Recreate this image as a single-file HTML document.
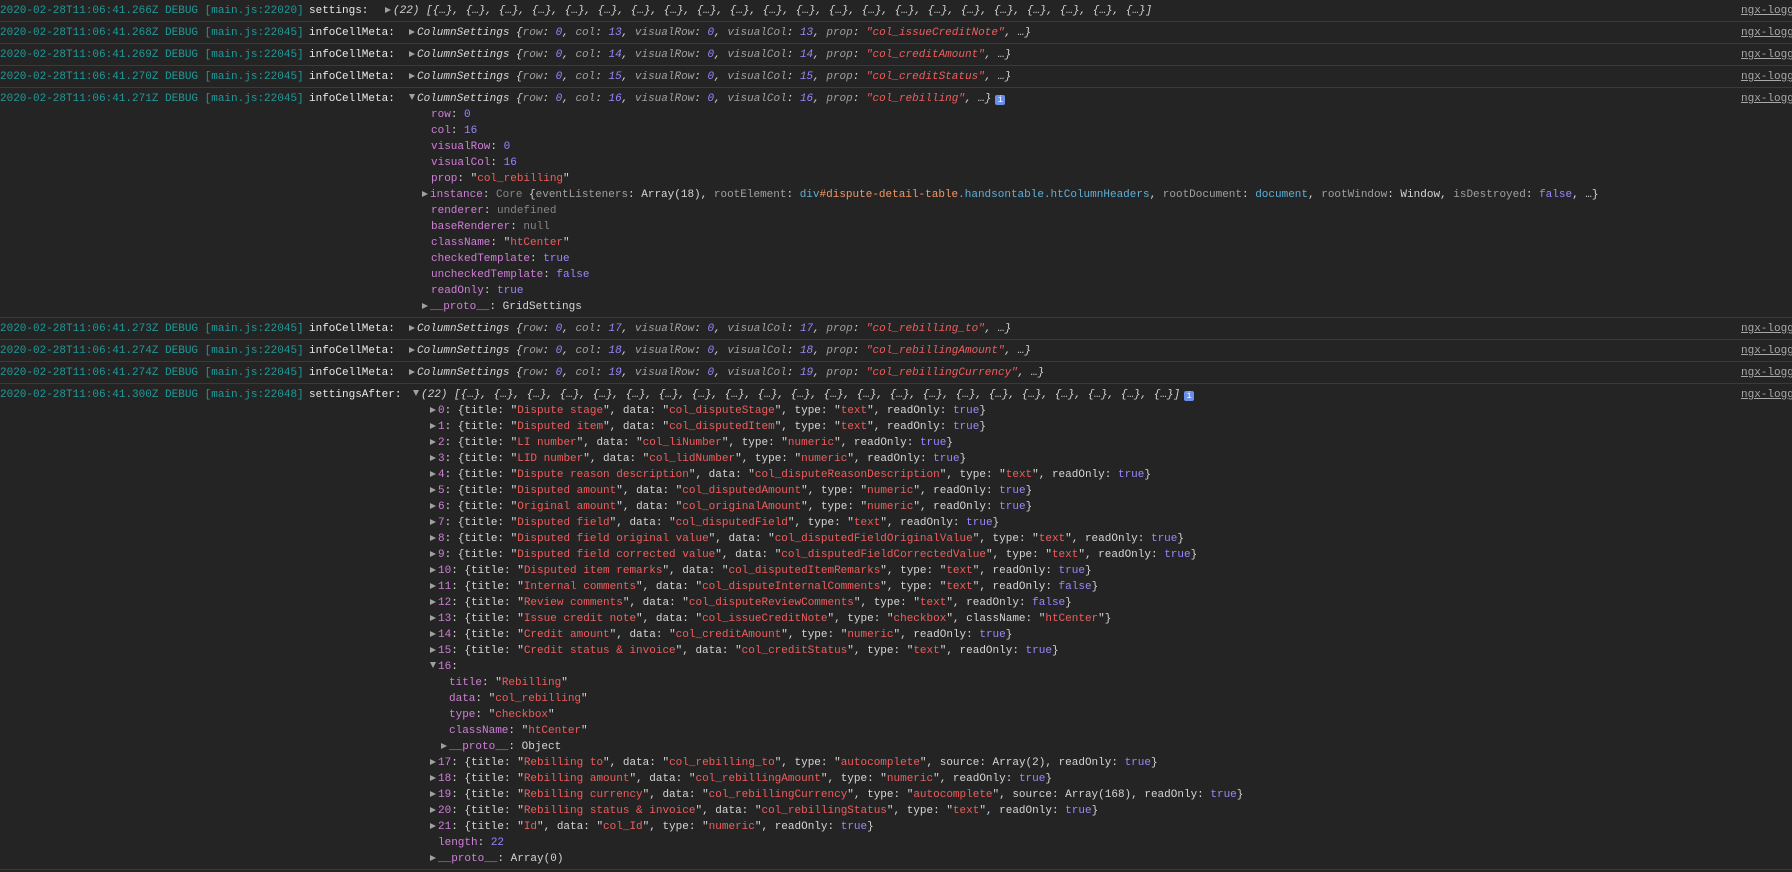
<!DOCTYPE html>
<html><head><meta charset="utf-8"><style>
html,body{margin:0;padding:0;background:#242424;width:1792px;height:872px;overflow:hidden}
body{font-family:"Liberation Mono",monospace;font-size:11px;color:#d5d5d5;line-height:16px;position:relative}
.row{position:relative;border-bottom:1px solid #3a3a3a;padding:3px 0 2px 0;height:16px}
.row.tall{height:auto}
.row>span{white-space:pre}
.ts{position:absolute;left:0;top:3px;color:#1f9a9a}
.lb{position:absolute;left:309px;top:3px;color:#e8e8e8}
.src{position:absolute;left:1741px;top:3px;color:#a8a8a8;text-decoration:underline}
.l{height:16px;position:relative;white-space:pre}
.i{font-style:italic}
.k{color:#a0a0a0}
.n{color:#9a86ff}
.s{color:#ef5d5d}
.p{color:#d07fd8}
.g{color:#868686}
.bl{color:#5db0d7}
.or{color:#f29766}
.tri{display:inline-block;width:0;height:0;border-top:3.5px solid transparent;border-bottom:3.5px solid transparent;border-left:6px solid #a0a0a0;margin-right:2px;vertical-align:0}
.trd{display:inline-block;width:0;height:0;border-left:3.5px solid transparent;border-right:3.5px solid transparent;border-top:6px solid #a0a0a0;margin-right:2px;vertical-align:1px}
.info{display:inline-block;width:10px;height:10px;background:#6b8fe8;color:#fff;border-radius:2px;font-size:9px;line-height:10px;text-align:center;font-style:normal;vertical-align:-1px;margin-left:4px}
</style></head><body>
<div class="row"><span class="ts">2020-02-28T11:06:41.266Z DEBUG [main.js:22020]</span><span class="lb">settings:</span><span style="position:absolute;left:385px;top:3px"><span class="tri"></span><span class="i">(22) [{…}, {…}, {…}, {…}, {…}, {…}, {…}, {…}, {…}, {…}, {…}, {…}, {…}, {…}, {…}, {…}, {…}, {…}, {…}, {…}, {…}, {…}]</span></span><span class="src">ngx-logg</span></div>
<div class="row"><span class="ts">2020-02-28T11:06:41.268Z DEBUG [main.js:22045]</span><span class="lb">infoCellMeta:</span><span style="position:absolute;left:409px;top:3px"><span class="tri"></span><span class="i">ColumnSettings {<span class="k">row</span>: <span class="n">0</span>, <span class="k">col</span>: <span class="n">13</span>, <span class="k">visualRow</span>: <span class="n">0</span>, <span class="k">visualCol</span>: <span class="n">13</span>, <span class="k">prop</span>: <span class="s">"col_issueCreditNote"</span>, …}</span></span><span class="src">ngx-logg</span></div>
<div class="row"><span class="ts">2020-02-28T11:06:41.269Z DEBUG [main.js:22045]</span><span class="lb">infoCellMeta:</span><span style="position:absolute;left:409px;top:3px"><span class="tri"></span><span class="i">ColumnSettings {<span class="k">row</span>: <span class="n">0</span>, <span class="k">col</span>: <span class="n">14</span>, <span class="k">visualRow</span>: <span class="n">0</span>, <span class="k">visualCol</span>: <span class="n">14</span>, <span class="k">prop</span>: <span class="s">"col_creditAmount"</span>, …}</span></span><span class="src">ngx-logg</span></div>
<div class="row"><span class="ts">2020-02-28T11:06:41.270Z DEBUG [main.js:22045]</span><span class="lb">infoCellMeta:</span><span style="position:absolute;left:409px;top:3px"><span class="tri"></span><span class="i">ColumnSettings {<span class="k">row</span>: <span class="n">0</span>, <span class="k">col</span>: <span class="n">15</span>, <span class="k">visualRow</span>: <span class="n">0</span>, <span class="k">visualCol</span>: <span class="n">15</span>, <span class="k">prop</span>: <span class="s">"col_creditStatus"</span>, …}</span></span><span class="src">ngx-logg</span></div>
<div class="row tall"><span class="ts">2020-02-28T11:06:41.271Z DEBUG [main.js:22045]</span><span class="lb">infoCellMeta:</span><span class="src">ngx-logg</span>
<div class="l" style="padding-left:409px"><span class="trd"></span><span class="i">ColumnSettings {<span class="k">row</span>: <span class="n">0</span>, <span class="k">col</span>: <span class="n">16</span>, <span class="k">visualRow</span>: <span class="n">0</span>, <span class="k">visualCol</span>: <span class="n">16</span>, <span class="k">prop</span>: <span class="s">"col_rebilling"</span>, …}<span class="info">i</span></span></div>
<div class="l" style="padding-left:431px"><span class="p">row</span>: <span class="n">0</span></div>
<div class="l" style="padding-left:431px"><span class="p">col</span>: <span class="n">16</span></div>
<div class="l" style="padding-left:431px"><span class="p">visualRow</span>: <span class="n">0</span></div>
<div class="l" style="padding-left:431px"><span class="p">visualCol</span>: <span class="n">16</span></div>
<div class="l" style="padding-left:431px"><span class="p">prop</span>: "<span class="s">col_rebilling</span>"</div>
<div class="l" style="padding-left:422px"><span class="tri"></span><span class="p">instance</span>: <span class="g">Core</span> {<span class="k">eventListeners</span>: Array(18), <span class="k">rootElement</span>: <span class="bl">div</span><span class="or">#dispute-detail-table</span><span class="bl">.handsontable.htColumnHeaders</span>, <span class="k">rootDocument</span>: <span class="bl">document</span>, <span class="k">rootWindow</span>: Window, <span class="k">isDestroyed</span>: <span class="n">false</span>, …}</div>
<div class="l" style="padding-left:431px"><span class="p">renderer</span>: <span class="g">undefined</span></div>
<div class="l" style="padding-left:431px"><span class="p">baseRenderer</span>: <span class="g">null</span></div>
<div class="l" style="padding-left:431px"><span class="p">className</span>: "<span class="s">htCenter</span>"</div>
<div class="l" style="padding-left:431px"><span class="p">checkedTemplate</span>: <span class="n">true</span></div>
<div class="l" style="padding-left:431px"><span class="p">uncheckedTemplate</span>: <span class="n">false</span></div>
<div class="l" style="padding-left:431px"><span class="p">readOnly</span>: <span class="n">true</span></div>
<div class="l" style="padding-left:422px"><span class="tri"></span><span class="p">__proto__</span>: GridSettings</div>
</div>
<div class="row"><span class="ts">2020-02-28T11:06:41.273Z DEBUG [main.js:22045]</span><span class="lb">infoCellMeta:</span><span style="position:absolute;left:409px;top:3px"><span class="tri"></span><span class="i">ColumnSettings {<span class="k">row</span>: <span class="n">0</span>, <span class="k">col</span>: <span class="n">17</span>, <span class="k">visualRow</span>: <span class="n">0</span>, <span class="k">visualCol</span>: <span class="n">17</span>, <span class="k">prop</span>: <span class="s">"col_rebilling_to"</span>, …}</span></span><span class="src">ngx-logg</span></div>
<div class="row"><span class="ts">2020-02-28T11:06:41.274Z DEBUG [main.js:22045]</span><span class="lb">infoCellMeta:</span><span style="position:absolute;left:409px;top:3px"><span class="tri"></span><span class="i">ColumnSettings {<span class="k">row</span>: <span class="n">0</span>, <span class="k">col</span>: <span class="n">18</span>, <span class="k">visualRow</span>: <span class="n">0</span>, <span class="k">visualCol</span>: <span class="n">18</span>, <span class="k">prop</span>: <span class="s">"col_rebillingAmount"</span>, …}</span></span><span class="src">ngx-logg</span></div>
<div class="row"><span class="ts">2020-02-28T11:06:41.274Z DEBUG [main.js:22045]</span><span class="lb">infoCellMeta:</span><span style="position:absolute;left:409px;top:3px"><span class="tri"></span><span class="i">ColumnSettings {<span class="k">row</span>: <span class="n">0</span>, <span class="k">col</span>: <span class="n">19</span>, <span class="k">visualRow</span>: <span class="n">0</span>, <span class="k">visualCol</span>: <span class="n">19</span>, <span class="k">prop</span>: <span class="s">"col_rebillingCurrency"</span>, …}</span></span><span class="src">ngx-logg</span></div>
<div class="row tall"><span class="ts">2020-02-28T11:06:41.300Z DEBUG [main.js:22048]</span><span class="lb">settingsAfter:</span><span class="src">ngx-logg</span>
<div class="l" style="padding-left:413px"><span class="trd"></span><span class="i">(22) [{…}, {…}, {…}, {…}, {…}, {…}, {…}, {…}, {…}, {…}, {…}, {…}, {…}, {…}, {…}, {…}, {…}, {…}, {…}, {…}, {…}, {…}]<span class="info">i</span></span></div>
<div class="l" style="padding-left:430px"><span class="tri"></span><span class="p">0</span>: {title: "<span class="s">Dispute stage</span>", data: "<span class="s">col_disputeStage</span>", type: "<span class="s">text</span>", readOnly: <span class="n">true</span>}</div>
<div class="l" style="padding-left:430px"><span class="tri"></span><span class="p">1</span>: {title: "<span class="s">Disputed item</span>", data: "<span class="s">col_disputedItem</span>", type: "<span class="s">text</span>", readOnly: <span class="n">true</span>}</div>
<div class="l" style="padding-left:430px"><span class="tri"></span><span class="p">2</span>: {title: "<span class="s">LI number</span>", data: "<span class="s">col_liNumber</span>", type: "<span class="s">numeric</span>", readOnly: <span class="n">true</span>}</div>
<div class="l" style="padding-left:430px"><span class="tri"></span><span class="p">3</span>: {title: "<span class="s">LID number</span>", data: "<span class="s">col_lidNumber</span>", type: "<span class="s">numeric</span>", readOnly: <span class="n">true</span>}</div>
<div class="l" style="padding-left:430px"><span class="tri"></span><span class="p">4</span>: {title: "<span class="s">Dispute reason description</span>", data: "<span class="s">col_disputeReasonDescription</span>", type: "<span class="s">text</span>", readOnly: <span class="n">true</span>}</div>
<div class="l" style="padding-left:430px"><span class="tri"></span><span class="p">5</span>: {title: "<span class="s">Disputed amount</span>", data: "<span class="s">col_disputedAmount</span>", type: "<span class="s">numeric</span>", readOnly: <span class="n">true</span>}</div>
<div class="l" style="padding-left:430px"><span class="tri"></span><span class="p">6</span>: {title: "<span class="s">Original amount</span>", data: "<span class="s">col_originalAmount</span>", type: "<span class="s">numeric</span>", readOnly: <span class="n">true</span>}</div>
<div class="l" style="padding-left:430px"><span class="tri"></span><span class="p">7</span>: {title: "<span class="s">Disputed field</span>", data: "<span class="s">col_disputedField</span>", type: "<span class="s">text</span>", readOnly: <span class="n">true</span>}</div>
<div class="l" style="padding-left:430px"><span class="tri"></span><span class="p">8</span>: {title: "<span class="s">Disputed field original value</span>", data: "<span class="s">col_disputedFieldOriginalValue</span>", type: "<span class="s">text</span>", readOnly: <span class="n">true</span>}</div>
<div class="l" style="padding-left:430px"><span class="tri"></span><span class="p">9</span>: {title: "<span class="s">Disputed field corrected value</span>", data: "<span class="s">col_disputedFieldCorrectedValue</span>", type: "<span class="s">text</span>", readOnly: <span class="n">true</span>}</div>
<div class="l" style="padding-left:430px"><span class="tri"></span><span class="p">10</span>: {title: "<span class="s">Disputed item remarks</span>", data: "<span class="s">col_disputedItemRemarks</span>", type: "<span class="s">text</span>", readOnly: <span class="n">true</span>}</div>
<div class="l" style="padding-left:430px"><span class="tri"></span><span class="p">11</span>: {title: "<span class="s">Internal comments</span>", data: "<span class="s">col_disputeInternalComments</span>", type: "<span class="s">text</span>", readOnly: <span class="n">false</span>}</div>
<div class="l" style="padding-left:430px"><span class="tri"></span><span class="p">12</span>: {title: "<span class="s">Review comments</span>", data: "<span class="s">col_disputeReviewComments</span>", type: "<span class="s">text</span>", readOnly: <span class="n">false</span>}</div>
<div class="l" style="padding-left:430px"><span class="tri"></span><span class="p">13</span>: {title: "<span class="s">Issue credit note</span>", data: "<span class="s">col_issueCreditNote</span>", type: "<span class="s">checkbox</span>", className: "<span class="s">htCenter</span>"}</div>
<div class="l" style="padding-left:430px"><span class="tri"></span><span class="p">14</span>: {title: "<span class="s">Credit amount</span>", data: "<span class="s">col_creditAmount</span>", type: "<span class="s">numeric</span>", readOnly: <span class="n">true</span>}</div>
<div class="l" style="padding-left:430px"><span class="tri"></span><span class="p">15</span>: {title: "<span class="s">Credit status &amp; invoice</span>", data: "<span class="s">col_creditStatus</span>", type: "<span class="s">text</span>", readOnly: <span class="n">true</span>}</div>
<div class="l" style="padding-left:430px"><span class="trd"></span><span class="p">16</span>:</div>
<div class="l" style="padding-left:449px"><span class="p">title</span>: "<span class="s">Rebilling</span>"</div>
<div class="l" style="padding-left:449px"><span class="p">data</span>: "<span class="s">col_rebilling</span>"</div>
<div class="l" style="padding-left:449px"><span class="p">type</span>: "<span class="s">checkbox</span>"</div>
<div class="l" style="padding-left:449px"><span class="p">className</span>: "<span class="s">htCenter</span>"</div>
<div class="l" style="padding-left:441px"><span class="tri"></span><span class="p">__proto__</span>: Object</div>
<div class="l" style="padding-left:430px"><span class="tri"></span><span class="p">17</span>: {title: "<span class="s">Rebilling to</span>", data: "<span class="s">col_rebilling_to</span>", type: "<span class="s">autocomplete</span>", source: Array(2), readOnly: <span class="n">true</span>}</div>
<div class="l" style="padding-left:430px"><span class="tri"></span><span class="p">18</span>: {title: "<span class="s">Rebilling amount</span>", data: "<span class="s">col_rebillingAmount</span>", type: "<span class="s">numeric</span>", readOnly: <span class="n">true</span>}</div>
<div class="l" style="padding-left:430px"><span class="tri"></span><span class="p">19</span>: {title: "<span class="s">Rebilling currency</span>", data: "<span class="s">col_rebillingCurrency</span>", type: "<span class="s">autocomplete</span>", source: Array(168), readOnly: <span class="n">true</span>}</div>
<div class="l" style="padding-left:430px"><span class="tri"></span><span class="p">20</span>: {title: "<span class="s">Rebilling status &amp; invoice</span>", data: "<span class="s">col_rebillingStatus</span>", type: "<span class="s">text</span>", readOnly: <span class="n">true</span>}</div>
<div class="l" style="padding-left:430px"><span class="tri"></span><span class="p">21</span>: {title: "<span class="s">Id</span>", data: "<span class="s">col_Id</span>", type: "<span class="s">numeric</span>", readOnly: <span class="n">true</span>}</div>
<div class="l" style="padding-left:438px"><span class="p">length</span>: <span class="n">22</span></div>
<div class="l" style="padding-left:430px"><span class="tri"></span><span class="p">__proto__</span>: Array(0)</div>
</div>
</body></html>
